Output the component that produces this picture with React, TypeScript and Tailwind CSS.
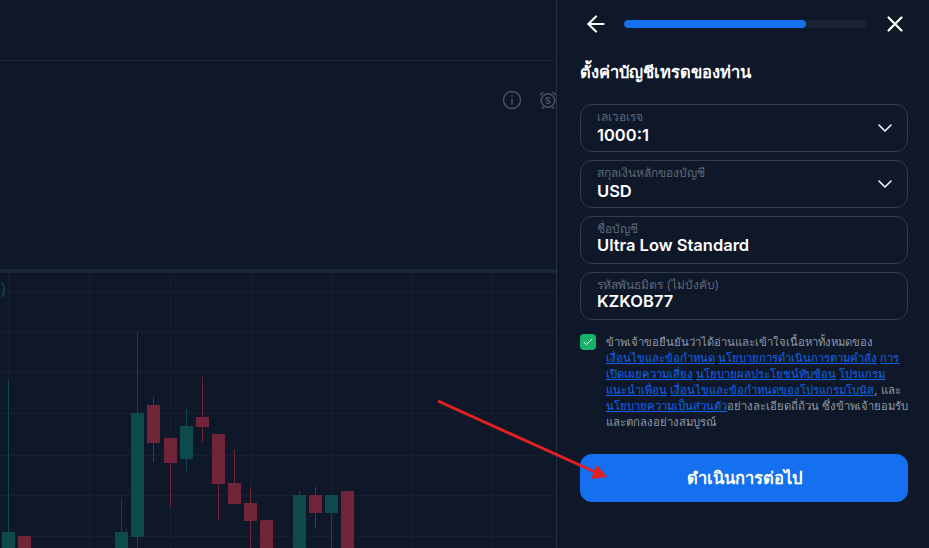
import { ArrowLeft, X, ChevronDown, Check } from 'lucide-react';

const hLines = [291, 331, 372, 413, 455, 495, 536];
const vLines = [8, 89, 170, 251, 332, 412, 492];

const GREEN = '#0e4a4c';
const RED = '#6f2537';

// [centerX, bodyTop, bodyBottom, wickTop, wickBottom, color]
const candles: [number, number, number, number, number, string][] = [
  [8, 532, 548, 381, 548, GREEN],
  [24, 536, 548, 536, 548, RED],
  [121, 532, 548, 499, 548, GREEN],
  [137, 413, 537, 332, 548, GREEN],
  [153, 405, 443, 397, 462, RED],
  [170, 438, 463, 438, 507, RED],
  [186, 426, 459, 409, 471, GREEN],
  [202, 417, 427, 377, 442, RED],
  [218, 434, 484, 434, 520, RED],
  [234, 483, 504, 450, 504, RED],
  [250, 503, 521, 487, 548, RED],
  [266, 520, 548, 520, 548, RED],
  [299, 495, 548, 491, 548, GREEN],
  [315, 495, 513, 487, 528, RED],
  [331, 495, 513, 495, 548, GREEN],
  [347, 491, 548, 491, 548, RED],
];

function ChartArea() {
  return (
    <div className="relative h-full min-w-0 flex-1">
      <svg className="block h-full w-full" viewBox="0 0 556 548" aria-hidden="true">
        <line x1="0" x2="556" y1="60.5" y2="60.5" stroke="#1a2433" strokeWidth="1" />
        {hLines.map((y) => (
          <line key={y} x1="0" x2="556" y1={y + 0.5} y2={y + 0.5} stroke="#151f30" strokeWidth="1" />
        ))}
        {vLines.map((x) => (
          <line key={x} x1={x + 0.5} x2={x + 0.5} y1="273" y2="548" stroke="#151f30" strokeWidth="1" />
        ))}
        <rect x="0" y="269" width="556" height="4" fill="#1a2636" />
        {candles.map(([cx, top, bottom, wickTop, wickBottom, color]) => (
          <g key={cx}>
            <rect x={cx} y={wickTop} width="1" height={wickBottom - wickTop} fill={color} />
            <rect x={cx - 6} y={top} width="13" height={bottom - top} fill={color} />
          </g>
        ))}
        {/* info icon */}
        <g fill="none" stroke="#4a5363" strokeWidth="1.5">
          <circle cx="512" cy="100" r="8.500" />
          <path d="M512 99v5.500M512 95.500v1.200" />
        </g>
        {/* alarm icon */}
        <g fill="none" stroke="#4a5363" strokeWidth="1.5">
          <circle cx="548" cy="100.500" r="6.800" />
          <path d="M540 95l3.500-3M556 95l-3.500-3M542 108.500l2-2M554 108.500l-2-2" />
        </g>
        <text x="548" y="103.500" textAnchor="middle" fontSize="9" fontWeight="700" fill="#4a5363">
          S
        </text>
        <path d="M2 283q4.500 7 0 14" fill="none" stroke="#0e4a4c" strokeWidth="1.500" />
      </svg>
    </div>
  );
}

function Field({ label, value, chevron }: { label: string; value: string; chevron?: boolean }) {
  return (
    <div className="flex h-12 items-center justify-between rounded-xl border border-[#333c4d] pl-4 pr-[10px]">
      <div className="mt-[-1px] flex flex-col self-start pt-[6px]">
        <span className="text-xs leading-[14px] text-[#5f6878]">{label}</span>
        <span className={`text-[16.500px] font-semibold leading-5 text-white ${chevron ? 'mt-px' : '-mt-px'}`}>
          {value}
        </span>
      </div>
      {chevron && <ChevronDown className="h-6 w-6 shrink-0 text-white" strokeWidth={1.5} />}
    </div>
  );
}

function TermsLink({ children }: { children: string }) {
  return <span className="text-[#1264e8] underline">{children}</span>;
}

function SetupPanel() {
  return (
    <aside className="flex h-full w-[373px] shrink-0 flex-col border-l border-[#263041] pl-[23px] pr-[21px]">
      <div className="flex h-12 items-center">
        <ArrowLeft className="ml-[3px] h-[26px] w-[26px] shrink-0 text-white" strokeWidth={1.9} />
        <div className="ml-[15px] h-2 w-[243px] shrink-0 overflow-hidden rounded-full bg-[#182233]">
          <div className="h-full w-[182px] rounded-full bg-[#1570ef]" />
        </div>
        <X className="ml-[15px] h-[26px] w-[26px] shrink-0 text-white" strokeWidth={2} />
      </div>
      <h2 className="mt-3 text-[16.500px] font-bold leading-6 text-white">ตั้งค่าบัญชีเทรดของท่าน</h2>
      <div className="mt-5 flex flex-col gap-2">
        <Field label="เลเวอเรจ" value="1000:1" chevron />
        <Field label="สกุลเงินหลักของบัญชี" value="USD" chevron />
        <Field label="ชื่อบัญชี" value="Ultra Low Standard" />
        <Field label="รหัสพันธมิตร (ไม่บังคับ)" value="KZKOB77" />
      </div>
      <div className="mt-[14px] flex gap-[10px]">
        <div className="flex h-4 w-4 shrink-0 items-center justify-center rounded-[4px] bg-[#17b26a]">
          <Check className="h-3 w-3 text-white" strokeWidth={2} />
        </div>
        <p className="whitespace-nowrap text-[11.300px] leading-4 text-[#8f98a8]">
          ข้าพเจ้าขอยืนยันว่าได้อ่านและเข้าใจเนื้อหาทั้งหมดของ
          <br />
          <TermsLink>เงื่อนไขและข้อกำหนด</TermsLink> <TermsLink>นโยบายการดำเนินการตามคำสั่ง</TermsLink>{' '}
          <TermsLink>การ</TermsLink>
          <br />
          <TermsLink>เปิดเผยความเสี่ยง</TermsLink> <TermsLink>นโยบายผลประโยชน์ทับซ้อน</TermsLink>{' '}
          <TermsLink>โปรแกรม</TermsLink>
          <br />
          <TermsLink>แนะนำเพื่อน</TermsLink> <TermsLink>เงื่อนไขและข้อกำหนดของโปรแกรมโบนัส</TermsLink>, และ
          <br />
          <TermsLink>นโยบายความเป็นส่วนตัว</TermsLink>อย่างละเอียดถี่ถ้วน ซึ่งข้าพเจ้ายอมรับ
          <br />
          และตกลงอย่างสมบูรณ์
        </p>
      </div>
      <button
        type="button"
        className="mt-6 h-12 w-full rounded-xl bg-[#1570ef] text-[16.500px] font-bold text-white"
      >
        ดำเนินการต่อไป
      </button>
    </aside>
  );
}

export default function App() {
  return (
    <div className="relative flex h-[548px] w-[929px] overflow-hidden bg-[#0e1829] font-['Inter','Noto_Sans',sans-serif]">
      <ChartArea />
      <SetupPanel />
      {/* red annotation arrow */}
      <svg className="pointer-events-none absolute inset-0 h-full w-full" viewBox="0 0 929 548" aria-hidden="true">
        <line x1="438" y1="401" x2="595" y2="472" stroke="#e42023" strokeWidth="3" />
        <polygon points="607,477 591,479 597,465" fill="#e42023" />
      </svg>
    </div>
  );
}
